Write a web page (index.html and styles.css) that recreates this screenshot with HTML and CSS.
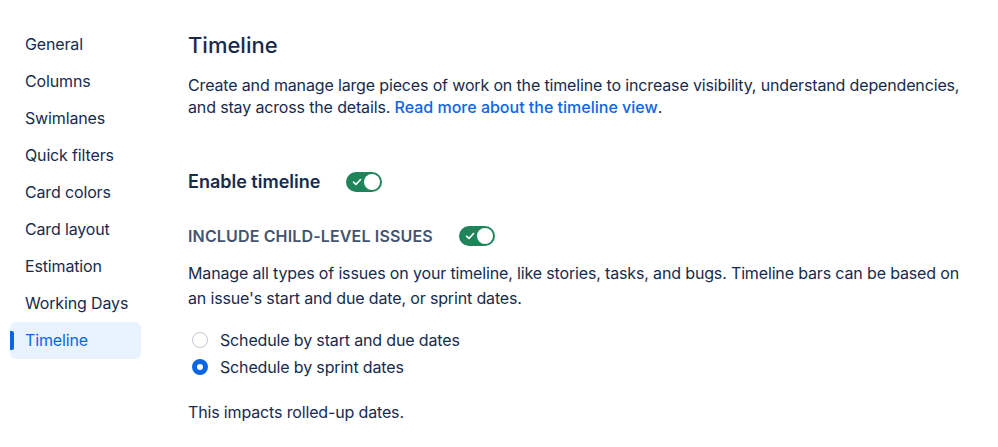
FILE: index.html
```html
<!doctype html>
<html><head>
<meta charset="utf-8">
<title>Board settings - Timeline</title>
<link rel="stylesheet" href="styles.css">
</head><body>
<div class="page">
	<nav class="sidebar">
		<a class="nav-item" href="#">General</a>
		<a class="nav-item" href="#">Columns</a>
		<a class="nav-item" href="#">Swimlanes</a>
		<a class="nav-item" href="#">Quick filters</a>
		<a class="nav-item" href="#">Card colors</a>
		<a class="nav-item" href="#">Card layout</a>
		<a class="nav-item" href="#">Estimation</a>
		<a class="nav-item" href="#">Working Days</a>
		<a class="nav-item selected" href="#">Timeline</a>
	</nav>
	<main class="content">
		<h1>Timeline</h1>
		<p class="intro">Create and manage large pieces of work on the timeline to increase visibility, understand dependencies, and stay across the details. <a href="#">Read more about the timeline view</a>.</p>

		<div class="setting-row enable">
			<span class="setting-title">Enable timeline</span>
			<span class="toggle"><svg width="10" height="10" viewBox="0 0 10 10"><path d="M1.5 5.2 L4 7.5 L8.5 2.5" fill="none" stroke="#fff" stroke-width="1.6" stroke-linecap="round" stroke-linejoin="round"/></svg><span class="knob"></span></span>
		</div>

		<div class="setting-row child">
			<span class="setting-label">Include child-level issues</span>
			<span class="toggle"><svg width="10" height="10" viewBox="0 0 10 10"><path d="M1.5 5.2 L4 7.5 L8.5 2.5" fill="none" stroke="#fff" stroke-width="1.6" stroke-linecap="round" stroke-linejoin="round"/></svg><span class="knob"></span></span>
		</div>

		<p class="desc">Manage all types of issues on your timeline, like stories, tasks, and bugs. Timeline bars can be based on an issue's start and due date, or sprint dates.</p>

		<div class="radios">
			<label class="radio"><span class="dot"></span>Schedule by start and due dates</label>
			<label class="radio"><span class="dot checked"></span>Schedule by sprint dates</label>
		</div>

		<p class="note">This impacts rolled-up dates.</p>
	</main>
</div>
</body></html>
```

FILE: styles.css
```css
body {
	margin: 0;
	background: #fff;
	color: #172B4D;
	font: 16px/24px Inter, 'Noto Sans', sans-serif;
	letter-spacing: -0.15px;
}

.page {
	display: flex;
	padding: 26px 0 0 10px;
}

.sidebar {
	display: flex;
	flex-direction: column;
	width: 131px;
	flex-shrink: 0;
}

.nav-item {
	display: block;
	height: 37px;
	line-height: 37px;
	padding-left: 15px;
	color: #172B4D;
	text-decoration: none;
	border-radius: 6px;
	position: relative;
}

.nav-item.selected {
	background: #E9F2FF;
	color: #0C66E4;
}

.nav-item.selected:before {
	content: "";
	position: absolute;
	left: 0; top: 9px; bottom: 9px;
	width: 4px;
	border-radius: 0 2px 2px 0;
	background: #0C66E4;
}

.content {
	margin-left: 47px;
	width: 790px;
}

h1 {
	margin: 4px 0 0 0;
	font-size: 22px;
	line-height: 30px;
	font-weight: 500;
	letter-spacing: 0;
}

.intro {
	margin: 14px 0 0 0;
	line-height: 22px;
}

a {
	color: #0C66E4;
	text-decoration: none;
}

.intro a {
	font-weight: 500;
	letter-spacing: 0;
}

.setting-row {
	display: flex;
	align-items: center;
}

.enable {
	margin-top: 52px;
}

.setting-title {
	font-size: 18px;
	font-weight: 600;
	margin-right: 26px;
	letter-spacing: 0;
}

.child {
	margin-top: 30px;
}

.setting-label {
	text-transform: uppercase;
	font-size: 16px;
	font-weight: 600;
	color: #44546F;
	margin-right: 26px;
	letter-spacing: 0.15px;
}

.toggle {
	display: inline-flex;
	align-items: center;
	justify-content: space-between;
	width: 36px;
	height: 20px;
	box-sizing: border-box;
	padding: 0 2px 0 6px;
	border-radius: 10px;
	background: #1F845A;
}

.knob {
	width: 16px;
	height: 16px;
	border-radius: 50%;
	background: #fff;
}

.desc {
	margin: 13px 0 0 0;
	line-height: 25px;
}

.radios {
	margin-top: 15px;
	display: flex;
	flex-direction: column;
}

.radio {
	display: flex;
	align-items: center;
	height: 27px;
	padding-left: 4px;
}

.dot {
	width: 16px;
	height: 16px;
	border-radius: 50%;
	border: 1px solid #C1C7D0;
	margin-right: 12px;
	box-sizing: border-box;
}

.dot.checked {
	border: 5px solid #0C66E4;
	background: #fff;
}

.note {
	margin: 20px 0 0 0;
}
```
